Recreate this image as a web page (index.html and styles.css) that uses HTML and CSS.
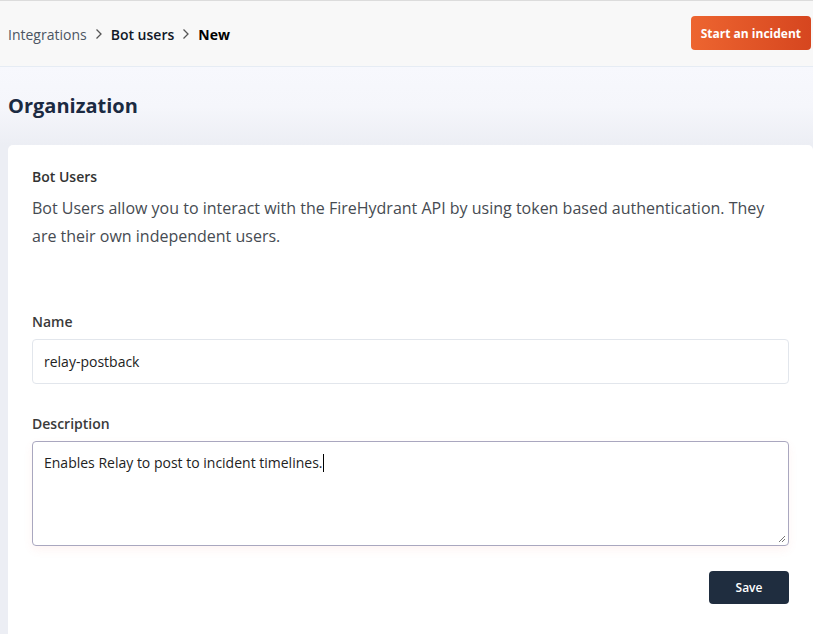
FILE: index.html
```html
<!DOCTYPE html>
<html lang="en">
<head>
<meta charset="utf-8">
<title>Bot users - New</title>
<link rel="stylesheet" href="styles.css">
</head>
<body>
<header class="topbar">
  <nav class="crumbs">
    <span class="crumb">Integrations</span>
    <svg class="chev" width="14" height="14" viewBox="0 0 14 14"><path d="M4.5 2.5 L9 7 L4.5 11.5" fill="none" stroke="#555" stroke-width="1.3"/></svg>
    <span class="crumb mid">Bot users</span>
    <svg class="chev" width="14" height="14" viewBox="0 0 14 14"><path d="M4.5 2.5 L9 7 L4.5 11.5" fill="none" stroke="#555" stroke-width="1.3"/></svg>
    <span class="crumb cur">New</span>
  </nav>
  <button class="incident">Start an incident</button>
</header>
<main class="page">
  <h1 class="title">Organization</h1>
  <section class="card">
    <h2 class="card-title">Bot Users</h2>
    <p class="intro">Bot Users allow you to interact with the FireHydrant API by using token based authentication. They are their own independent users.</p>
    <div class="field">
      <label class="label">Name</label>
      <div class="input">relay-postback</div>
    </div>
    <div class="field field-desc">
      <label class="label">Description</label>
      <div class="textarea">Enables Relay to post to incident timelines.<span class="caret"></span>
        <svg class="grip" width="9" height="9" viewBox="0 0 9 9"><path d="M8 2 L2 8 M8 5 L5 8" stroke="#777" stroke-width="1"/></svg>
      </div>
    </div>
    <div class="actions">
      <button class="save">Save</button>
    </div>
  </section>
</main>
</body>
</html>
```
FILE: styles.css
```css
* { box-sizing: border-box; }
html, body { margin: 0; padding: 0; }
body {
  font-family: "Open Sans", "Noto Sans", sans-serif;
  background: #eeeff5;
  overflow: hidden;
  height: 634px;
}
.topbar {
  height: 67px;
  border-top: 1px solid #dcdcdc;
  border-bottom: 1px solid #e6ecf4;
  background: #f8f8f8;
  display: flex;
  align-items: center;
  justify-content: space-between;
  padding: 0 2px 0 8px;
}
.crumbs {
  display: flex;
  align-items: center;
  gap: 5px;
  font-size: 14px;
  margin-top: 1px;
}
.crumb { color: #4b5563; }
.crumb.mid { color: #111827; font-weight: 600; }
.crumb.cur { color: #000; font-weight: 700; }
.incident {
  font-family: inherit;
  font-size: 12px;
  font-weight: 700;
  color: #fff;
  border: 0;
  border-radius: 4px;
  height: 34px;
  padding: 0 10px;
  background: linear-gradient(90deg, #ed6530, #d6461f);
  margin-top: -1px;
}
.page {
  background: linear-gradient(180deg, #f7f8fd 0px, #f5f6fb 40px, #eceef4 78px, #eceef4 100%);
  padding: 0 0 0 8px;
  height: 567px;
}
.title {
  margin: 0;
  font-size: 20px;
  font-weight: 700;
  color: #1b2a42;
  height: 78px;
  padding-top: 25px;
  line-height: 28px;
}
.card {
  background: #fff;
  border-radius: 5px 5px 0 0;
  padding: 22px 24px 0 24px;
  height: 489px;
}
.card-title {
  margin: 0;
  font-size: 14px;
  font-weight: 600;
  color: #333;
  line-height: 20px;
}
.intro {
  margin: 7px 0 0;
  font-size: 16px;
  line-height: 28px;
  color: #464b52;
}
.field { margin-top: 62px; }
.field.field-desc { margin-top: 30px; }
.label {
  display: block;
  font-size: 14px;
  font-weight: 600;
  color: #3a3a3a;
  line-height: 20px;
  margin-bottom: 7px;
}
.input {
  height: 45px;
  border: 1px solid #e2e6ec;
  border-radius: 4px;
  padding: 0 11px;
  font-size: 14px;
  line-height: 43px;
  color: #222;
}
.textarea {
  position: relative;
  height: 105px;
  border: 1px solid #a9a7bf;
  border-radius: 4px;
  padding: 9px 11px;
  font-size: 14px;
  line-height: 24px;
  color: #222;
  box-shadow: 0 4px 10px rgba(240, 120, 100, 0.08);
}
.caret {
  display: inline-block;
  width: 1px;
  height: 18px;
  background: #000;
  vertical-align: -4px;
  margin-left: 1px;
}
.grip { position: absolute; right: 2px; bottom: 2px; }
.actions {
  display: flex;
  justify-content: flex-end;
  margin-top: 25px;
}
.save {
  font-family: inherit;
  width: 80px;
  height: 33px;
  border: 0;
  border-radius: 4px;
  background: #1f2d3f;
  color: #fff;
  font-size: 12px;
  font-weight: 600;
}
```
